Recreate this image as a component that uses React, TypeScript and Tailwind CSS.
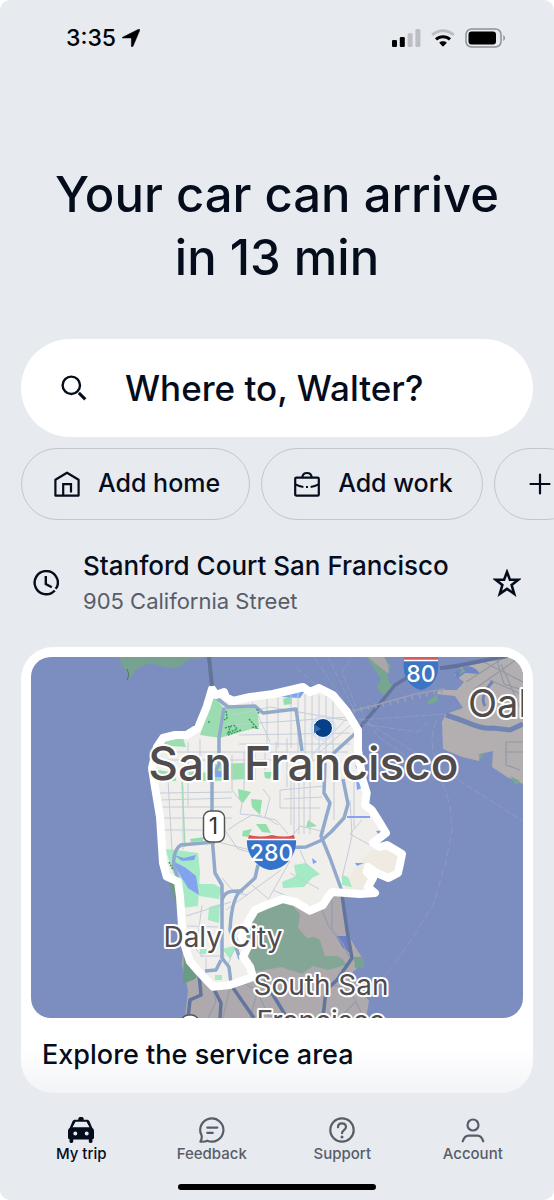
import type { ReactNode } from "react";

type IconProps = { className?: string };

function HomeIcon({ className }: IconProps) {
  return (
    <svg viewBox="0 0 26 26" className={className} fill="none" stroke="currentColor" strokeWidth="2.2" aria-hidden="true">
      <path d="M1.4 8.8 13 1.7 24.6 8.8V24.6H1.4Z" strokeLinejoin="round" />
      <path d="M9.2 24V13.2H17V21.4" />
    </svg>
  );
}

function BriefcaseIcon({ className }: IconProps) {
  return (
    <svg viewBox="0 0 26 26" className={className} fill="none" stroke="currentColor" strokeWidth="2.2" aria-hidden="true">
      <rect x="1.2" y="6.6" width="23.6" height="18" rx="1.2" />
      <path d="M8.3 6.4C8.6 3.6 10.4 2 13 2s4.400 1.600 4.700 4.400" />
      <path d="M1.400 13.400c3 1.600 5.500 2.200 8 2.500M24.600 13.400c-3 1.600-5.500 2.200-8 2.500" strokeWidth="2" />
      <path d="M12 16h2" strokeWidth="2" />
    </svg>
  );
}

function PlusIcon({ className }: IconProps) {
  return (
    <svg viewBox="0 0 26 26" className={className} fill="none" stroke="currentColor" strokeWidth="2.2" strokeLinecap="round" aria-hidden="true">
      <path d="M13 3.500V22.500M3.500 13H22.500" />
    </svg>
  );
}

function SearchIcon({ className }: IconProps) {
  return (
    <svg viewBox="0 0 26 26" className={className} fill="none" stroke="currentColor" strokeWidth="2.400" aria-hidden="true">
      <circle cx="10.300" cy="10.300" r="8.700" />
      <path d="M17.800 17.900 24.300 24.400" strokeWidth="3" />
    </svg>
  );
}

function ClockIcon({ className }: IconProps) {
  return (
    <svg viewBox="0 0 26 26" className={className} fill="none" stroke="currentColor" strokeWidth="2.400" aria-hidden="true">
      <path d="M21.800 20.500A11.600 11.600 0 1 1 24 17L22.600 18.800" />
      <path d="M12.800 6V14L18.800 17.300" />
    </svg>
  );
}

function StarIcon({ className }: IconProps) {
  return (
    <svg viewBox="0 0 26 26" className={className} fill="none" stroke="currentColor" strokeWidth="2.400" aria-hidden="true">
      <path d="M13 2.800 15.700 10H23.500L17.300 14.900 19.700 23 13 18.400 6.300 23 8.700 14.900 2.500 10H10.300Z" />
    </svg>
  );
}

function TaxiIcon({ className }: IconProps) {
  return (
    <svg viewBox="0 0 26 26" className={className} fill="currentColor" aria-hidden="true">
      <path
        fillRule="evenodd"
        d="M10.300 2.800V1.600C10.300.7 11.200 0 13 0s2.700.7 2.700 1.600v1.200h3.200c1.300 0 2.200.6 2.700 1.800l2.600 6.200c1.200.8 1.800 1.900 1.800 3.400v6.200c0 1-.6 1.600-1.500 1.700v2.500c0 .9-.6 1.400-1.400 1.400h-.9c-.8 0-1.400-.5-1.400-1.400v-2.200H5.200v2.200c0 .9-.6 1.400-1.400 1.400h-.9c-.8 0-1.400-.5-1.400-1.400v-2.500C.6 22 0 21.400 0 20.400v-6.200c0-1.500.6-2.600 1.800-3.400l2.600-6.200c.5-1.200 1.400-1.800 2.700-1.800ZM7.500 4.700 4.500 10.300h17L18.500 4.700ZM7.300 14.500a2 2 0 1 0 0 4 2 2 0 0 0 0-4Zm11.400 0a2 2 0 1 0 0 4 2 2 0 0 0 0-4Z"
      />
    </svg>
  );
}

function FeedbackIcon({ className }: IconProps) {
  return (
    <svg viewBox="0 0 26 26" className={className} fill="none" stroke="currentColor" strokeWidth="2.200" strokeLinecap="round" strokeLinejoin="round" aria-hidden="true">
      <path d="M2.600 18.500A11.600 11.600 0 1 1 8.300 23.700C6.300 24.700 3.800 24.900 1.400 24.600 2.600 22.600 3 20.500 2.600 18.500Z" />
      <path d="M8.300 10.600H18.300M8.300 15.800H13.800" />
    </svg>
  );
}

function HelpIcon({ className }: IconProps) {
  return (
    <svg viewBox="0 0 26 26" className={className} fill="none" stroke="currentColor" strokeWidth="2.200" strokeLinecap="round" aria-hidden="true">
      <circle cx="13" cy="13" r="11.700" />
      <path d="M9 10.300C9 7.800 10.700 6.300 13 6.300s4 1.500 4 3.700c0 3-4 3.300-4 6.200" />
      <circle cx="13" cy="20" r="1.500" fill="currentColor" stroke="none" />
    </svg>
  );
}

function AccountIcon({ className }: IconProps) {
  return (
    <svg viewBox="0 0 26 26" className={className} fill="none" stroke="currentColor" strokeWidth="2.200" strokeLinecap="round" strokeLinejoin="round" aria-hidden="true">
      <circle cx="13" cy="8" r="5.500" />
      <path d="M2.700 24.300C4 20.500 5.800 18.600 8.500 18.600H17.500C20.200 18.600 22 20.500 23.300 24.300" />
    </svg>
  );
}

function StatusBar() {
  return (
    <div className="flex h-[76px] items-center justify-between pr-12 pl-[66px] text-black">
      <div className="flex items-center gap-1.5">
        <span className="text-[23px] leading-7 font-medium">3:35</span>
        <svg viewBox="0 0 18 18" className="size-[18px]" fill="currentColor" aria-label="Location in use">
          <path d="M.6 8.300 16.600.3c.8-.4 1.400.2 1.100 1L11 17.200c-.4 1-1.600.8-1.600-.2V9.400c0-.3-.2-.5-.5-.5H1C-.1 8.900-.3 8.800.6 8.300Z" stroke="currentColor" strokeWidth=".6" />
        </svg>
      </div>
      <div className="flex items-center gap-2.5">
        <svg viewBox="0 0 29 18" className="h-[18px] w-[29px]" aria-label="Signal">
          <rect x="0" y="11" width="5" height="7" rx="1.200" />
          <rect x="7.800" y="8" width="5" height="10" rx="1.200" />
          <rect x="15.600" y="4.300" width="5" height="13.700" rx="1.200" fill="#bcbfc3" />
          <rect x="23.400" y="0" width="5" height="18" rx="1.200" fill="#bcbfc3" />
        </svg>
        <svg viewBox="0 0 24 18" className="h-[18px] w-6" fill="none" strokeWidth="3" aria-label="Wi-Fi">
          <path d="M1.200 6C7.400.2 16.600.2 22.800 6" stroke="#bcbfc3" />
          <path d="M5 10.400C9 6.700 15 6.700 19 10.400" stroke="#000" />
          <path d="M8.200 13.700C10.400 11.800 13.600 11.800 15.800 13.700L12 17.800Z" fill="#000" />
        </svg>
        <svg viewBox="0 0 41 20" className="h-5 w-[41px]" aria-label="Battery">
          <rect x="1" y="1" width="35" height="18" rx="5.500" fill="none" stroke="#8e9196" strokeWidth="1.500" />
          <rect x="3.500" y="3.500" width="27.500" height="13" rx="3" />
          <path d="M38.300 7C40.500 8 40.500 12 38.300 13Z" fill="#8e9196" />
        </svg>
      </div>
    </div>
  );
}

const CITY =
  "M212 689 216 695 224 692 226 697 233 701 250 697 273 694 303 687 310 692 319 688 333 695 347 711.700 358 730 358 750 362.700 780 366.700 793 365 805 371.700 810 380 823 386 833 373 843 380 847 387 845 402 854 400 864 398 873 388.500 878 376.700 873 368 867 366.700 872 373 878 368 887 375 893 360 894 332 892 328 897 323 905 310 910.700 295 902 283 899 266.700 905 255 910 248 922 241.700 936.700 248 946.700 243 956.700 250 966.700 253 977 230 985 213 986.700 200 973 190 961.700 183 940 180 896.700 178 881.700 166.700 876.700 163 863 160 817 155 787 152 768 157 747 163 738 175 735 186.700 735 198 728 206.700 706.700Z";

function ServiceMap() {
  return (
    <svg
      viewBox="31 657 492 361"
      className="block w-full rounded-[20px]"
      role="img"
      aria-label="Map of the San Francisco service area"
      fontFamily='Inter, "Liberation Sans", sans-serif'
    >
      <defs>
        <clipPath id="city-clip">
          <path d={CITY} />
        </clipPath>
      </defs>
      <rect x="31" y="657" width="492" height="361" fill="#7c8ebf" />

      {/* Marin, Treasure Island and the East Bay */}
      <path d="M119 657 122 665 127 672 130 679 136 669 150 663 168 668 178 667 188 660 206 657Z" fill="#76a391" />
      <path d="M127 669 129 675 127 680" stroke="#4c7d63" fill="none" />
      <path d="M366 657 372 665 381 679 377 688 385 697 390 694 396 687 389 683 387 673 391 667 385 657Z" fill="#77a68f" />
      <path d="M368 657 376 664 389 674 388 665 384 657Z" fill="#aba6ac" />
      <path d="M523 657V784L507 777 492 767 493 751 480 754 479 761 462 757 443 749 442 722 446 714 463 708 455 696 437 694 438 690 457 690 464 682 455 675 461 667 480 662 500 657Z" fill="#b3afb0" />
      <path d="M455 672 462 668C470 663 478 670 480 674L465 673 457 679Z" fill="#7185c4" />
      <path d="M427 702 437 695 438 701 430 704ZM510 776 520 781 516 785ZM459 675 466 671 462 668ZM478 754 484 755 481 759Z" fill="#77aa8a" />
      <path d="M446 715C470 722 480 730 493 728L510 730 523 724" fill="none" stroke="#7085b4" strokeWidth="5" />
      <path d="M485 706C480 697 486 689 493 681" fill="none" stroke="#7085b4" strokeWidth="3" />
      <path d="M466 682 505 657M473 690 517 659M490 680 523 695M501 664 523 714M480 660 523 682M506 742V765L520 770M506 742H523M506 752H523M496 657 504 684 523 690" fill="none" stroke="#9398a6" strokeWidth="1.200" />
      <path d="M440 668C460 667 482 660 508 656" fill="none" stroke="#61739b" strokeWidth="4" />
      <path d="M356 732 378 706 395 685 415 673 435 668" fill="none" stroke="#62749e" strokeWidth="3.500" />
      <path d="M353 711 380 704 415 694 445 689" fill="none" stroke="#989eb5" strokeWidth="1.500" />
      <path d="M353 711 445 690" fill="none" stroke="#989eb5" strokeWidth="5" strokeDasharray="1.500 6" />
      <g fill="none" stroke="#a5adc9" strokeOpacity=".4" strokeWidth="1">
        <path d="M350 710 314 657M354 710 328 657M356 707 342 672 352 657M350 713 295 667M358 720 446 714M360 718 430 762 523 821M362 724 418 732 428 722M362 715 380 738 405 755" strokeDasharray="7 2" />
        <path d="M437 720C429 735 432 750 436 762L450 805 452 832 445 865 433 905 408 945 385 976" strokeDasharray="8 3" />
      </g>

      {/* Peninsula south of the service boundary */}
      <path d="M164 840 180 873 196 960 230 970 250 900 300 890 343 892 348 935 364 961 350 975 369 1001 366 1018H185L188 990 182 965 184 925 170 875Z" fill="#aea9ad" />
      <path d="M165 850 178 882 181 922 168 878 163 860Z" fill="#719981" />
      <path d="M184 950 200 973 195 979 183 984Z" fill="#6c9b83" />
      <path d="M246 930 253 910 275 900 291 904 300 914 298 928 307 938 320 936 325 950 343 959 346 965 328 970 313 966 302 974 281 967 255 972 247 950Z" fill="#84a696" />
      <path d="M298 928 308 913 321 908 322 930 340 950 338 956 325 956 320 940Z" fill="#b0a9ac" />
      <path d="M336 936H347L350 953 343 948Z" fill="#6d7fc4" />
      <path d="M354 957H364V968H355Z" fill="#76a391" />
      <path d="M322 910 328 925 343 944 349 957M332 900V930M263 972 250 1018M210 975 216 1002 208 1018M230 987 223 1018M365 990 330 985 320 1018M356 1001 340 1018M345 980 361 1012M270 1018 256 990 238 980" fill="none" stroke="#969cad" strokeWidth="1.200" />
      <g fill="none" stroke="#64759d" strokeWidth="3.500">
        <path d="M342 895 347 930 352 958 337 980 326 990 323 1018" />
        <path d="M199 974 201 995 190 1000 188 1018M213 987 221 1003 220 1018M231 985 254 1018M264 980 287 1018" />
      </g>

      {/* Service area */}
      <path d={CITY} fill="#f1efec" />
      <g clipPath="url(#city-clip)">
        <path d="M343 892 352 872 370 850 410 850V895Z" fill="#f0ebe2" />
        <path d="M212 695 223 707 238 707 257 706 259 727 230 735 220 738 200 735Z" fill="#9bddb0" />
        <path d="M165 741 183 738 186 747 170 746 160 744ZM158 770 176 773V781H158ZM188 770 208 773V781H190ZM215 764 245 763V779L215 781Z" fill="#9bdeb0" />
        <path d="M238 789 251 792 243 803 239 799ZM251 799 262 800 260 815 252 807ZM256 824 266 824 271 833 262 832ZM243 831 252 829 248 837 242 836ZM264 772 272 772 270 779 265 778ZM308 820 317 826 306 828ZM283 699 292 696 292 704 284 705ZM190 839 204 837 203 841 191 842Z" fill="#92dfac" />
        <path d="M165 849 176 850 198 853 200 872 198 906 182 908 177 883ZM199 884 214 884 221 888 219 899 199 896ZM209 907 220 904 219 923 208 920ZM222 949 238 945 230 959ZM200 949H207V954H200ZM294 865 306 863 320 874 312 878 304 887 283 888 282 882 296 876ZM342 875 348 877 352 887 342 885ZM215 975H222V980H215Z" fill="#a4eac5" />
        <path d="M174 855 184 858 196 855 194 860 182 861ZM173 861 186 868 196 876 199 895 188 888 177 870Z" fill="#83a2ef" />
        <path d="M215 771H222V777H215ZM281 697 305 691 300 698ZM355 765 362 770 358 772ZM356 780 364 787 357 790ZM312 858 317 862 313 864ZM355 863 364 863 357 866ZM376 831 384 830 378 834Z" fill="#7da4ef" />
        <g fill="none" stroke="#c5ccd9" strokeWidth="1">
          <path d="M158 752H348M158 760H340M160 793 232 792M161 800 232 798M162 807H232M163 818H232M164 830H210M168 780 172 850M188 742V806M200 739V756M232 755V790M244 752V790M255 750V780M265 746V770M276 742V782M287 738V787M183 785V850" />
          <path d="M234 715 270 707 350 721M228 725 350 717M239 735 350 733M239 744H350M267 692V750M252 702 270 742M278 698V748M291 695V748M298 693V754M305 694V758M312 694V762M319 695V759M326 695V758M333 699V756" />
          <path d="M318 754 355 721M322 764 354 733M313 754 347 718M280 790 325 786M284 799 322 797M280 808H320M280 790V808M291 781V825M294 779V834M299 779V834M304 779V834M310 779V834M334 779V820M354 775V828" />
          <path d="M232 790 242 803 240 814 262 816M238 823 252 815 276 820 288 834M228 830 238 823M263 789 270 798 265 817 278 825M222 826 238 849 249 852M218 842 250 850M281 870 226 910M252 885 272 902M290 861 269 898M290 839 300 826 325 832M290 873 319 889M273 890 318 910M300 850 307 866M350 800 352 836 342 878M362 820 350 834 370 845M186 916 231 902M187 926 218 927M190 935 204 935M202 905 197 944M188 940 203 957M200 956H225M206 958V980M239 935 228 965M222 878 235 893 248 895" />
        </g>
        <path d="M182 782 185 847" fill="none" stroke="#a4dcb9" strokeWidth="1.500" />
        <g fill="none" stroke="#91a9ca" strokeWidth="3.500" strokeLinejoin="round">
          <path d="M214 696 228 707 255 706 263 713 296 709 302 751M224 708 219 738V765L212 776V836L215 873 222 885V958L229 967 231 983" />
          <path d="M181 845C174 849 173 861 174 867L178 878M180 845 215 842M258 865 255 878 243 889C235 893 231 910 230 930L240 959M222 900C225 890 232 891 243 891M221 960 216 970 205 971M274 848 306 847 322 840 331 832 344 818 348 804 343 779M325 763 324 793 330 803 321 836 330 858 343 894M358 731 337 750 327 760" />
        </g>
        <path d="M347 817 370 817" stroke="#83a2ef" strokeWidth="2" />
        <path d="M226 711 227 718 224 720M225 728 231 726 228 733 237 729 233 724M249 719 257 728 251 727M257 709 259 714M209 721V724M169 862 173 870M228 735 241 730" fill="none" stroke="#349d60" strokeWidth="1.500" strokeDasharray="2 1" />
      </g>
      <path d={CITY} fill="none" stroke="#fff" strokeWidth="8" strokeLinejoin="round" />
      <path d="M209 657 212 686" stroke="#637499" strokeWidth="4" />

      {/* Route shields */}
      <rect x="203.500" y="811" width="21" height="31" rx="7" fill="#fff" stroke="#555" strokeWidth="1.500" />
      <text x="213.500" y="834" fontSize="23" textAnchor="middle" fill="#333">1</text>
      <path d="M249 835Q260 838 272 835 284 838 294 835L295 839H248Z" fill="#d95353" />
      <path d="M247 840H296C297 853 287 869 271 870 256 869 246 853 247 840Z" fill="#3574cd" />
      <path d="M247 839.500H296" stroke="#fff" strokeWidth="1.500" />
      <text x="271.500" y="861" fontSize="23" fontWeight="500" textAnchor="middle" fill="#fff">280</text>
      <path d="M404 657H438V660H404Z" fill="#d55a60" />
      <path d="M404 661H438C440 674 434 687 421 690 408 687 402 674 404 661Z" fill="#3b75c4" />
      <path d="M404 660.500H438" stroke="#fff" strokeWidth="1.500" />
      <text x="421" y="682" fontSize="23" fontWeight="500" textAnchor="middle" fill="#fff">80</text>
      <rect x="181.500" y="1015" width="17" height="20" rx="7" fill="#fff" stroke="#555" strokeWidth="1.500" />

      {/* Current location */}
      <circle cx="323" cy="728" r="13" fill="#cfdcf2" fillOpacity=".6" />
      <circle cx="323" cy="728" r="9.500" fill="#064088" stroke="#fff" strokeWidth="1" />
      <path d="M314 724 321 729 314 733Z" fill="#376aa8" />

      {/* Place names */}
      <g fill="#514b4b" stroke="#fff" strokeWidth="4" strokeLinejoin="round" paintOrder="stroke">
        <text x="303.500" y="780" fontSize="46" fontWeight="500" textAnchor="middle">San Francisco</text>
        <text x="468" y="717" fontSize="38">Oakland</text>
        <text x="223" y="947" fontSize="28" textAnchor="middle">Daly City</text>
        <text x="321" y="995" fontSize="28" textAnchor="middle">South San</text>
        <text x="321" y="1031" fontSize="28" textAnchor="middle">Francisco</text>
      </g>
    </svg>
  );
}

function Chip({ icon, label, name }: { icon: ReactNode; label?: string; name?: string }) {
  return (
    <button
      type="button"
      aria-label={name}
      className="flex h-[72px] shrink-0 items-center gap-[18px] rounded-full border border-[#c3c6cb] pr-[29px] pl-8 text-[25px] font-medium whitespace-nowrap"
    >
      {icon}
      {label && <span>{label}</span>}
    </button>
  );
}

const TABS = [
  { label: "My trip", Icon: TaxiIcon, active: true },
  { label: "Feedback", Icon: FeedbackIcon, active: false },
  { label: "Support", Icon: HelpIcon, active: false },
  { label: "Account", Icon: AccountIcon, active: false },
];

export default function App() {
  return (
    <div className="bg-white">
      <div className="flex min-h-screen flex-col overflow-hidden rounded-[10px] bg-[#e7eaef] font-['Inter','Liberation_Sans',sans-serif] text-[#050d1c]">
        <StatusBar />
        <main className="flex flex-col px-[21px]">
          <h1 className="mt-[87px] text-center text-[49px] leading-[63px] font-medium">
            Your car can arrive
            <br />
            in 13 min
          </h1>

          <label className="mt-[50px] flex h-[98px] items-center gap-[38px] rounded-full bg-white pr-8 pl-10">
            <SearchIcon className="size-[26px] shrink-0" />
            <input
              type="text"
              aria-label="Destination"
              placeholder="Where to, Walter?"
              className="min-w-0 flex-1 bg-transparent text-[35px] leading-10 font-medium outline-none placeholder:text-[#050d1c]"
            />
          </label>

          <div className="-mr-[21px] mt-[11px] flex gap-[11px] overflow-hidden">
            <Chip icon={<HomeIcon className="size-[26px]" />} label="Add home" />
            <Chip icon={<BriefcaseIcon className="size-[26px]" />} label="Add work" />
            <Chip icon={<PlusIcon className="size-[26px]" />} name="Add another place" />
          </div>

          <div className="mt-7 flex items-center gap-6 px-3">
            <ClockIcon className="size-[26px] shrink-0" />
            <div className="min-w-0 flex-1">
              <div className="text-[26px] leading-9 font-medium whitespace-nowrap">Stanford Court San Francisco</div>
              <div className="text-[22px] leading-[34px] text-[#585d68]">905 California Street</div>
            </div>
            <button type="button" aria-label="Save place">
              <StarIcon className="size-7" />
            </button>
          </div>

          <a href="#service-area" className="mt-[29px] block rounded-[32px] bg-linear-to-b from-white from-90% to-[#f3f4f8] p-2.5">
            <ServiceMap />
            <span className="block px-[11px] pt-[19px] pb-[10px] text-[27px] leading-9 font-medium">Explore the service area</span>
          </a>
        </main>

        <nav className="mt-auto grid grid-cols-4 px-4 pt-6">
          {TABS.map(({ label, Icon, active }) => (
            <a
              key={label}
              href="#"
              aria-current={active ? "page" : undefined}
              className={
                active
                  ? "flex flex-col items-center gap-px text-[15px] leading-5 font-medium"
                  : "flex flex-col items-center gap-px text-[15px] leading-5 font-medium text-[#585d68]"
              }
            >
              <Icon className="size-[26px]" />
              {label}
            </a>
          ))}
        </nav>
        <div className="mx-auto mt-5 mb-[10px] h-[6px] w-[198px] rounded-full bg-black" />
      </div>
    </div>
  );
}
